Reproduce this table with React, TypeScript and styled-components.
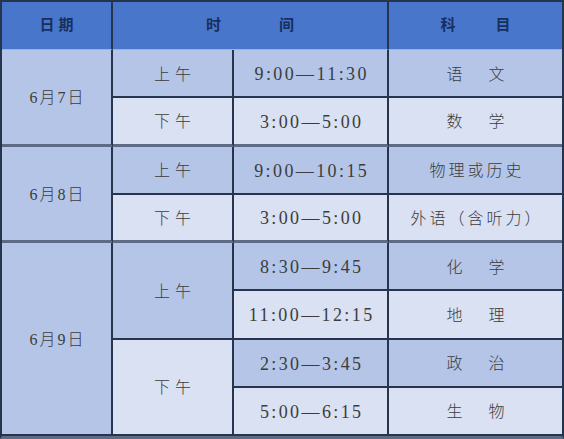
import React from "react";
import styled, { createGlobalStyle } from "styled-components";

const GlobalStyle = createGlobalStyle`
  html, body {
    margin: 0;
    padding: 0;
    background: #ffffff;
  }
  body {
    font-family: "Liberation Serif", "Noto Sans CJK SC", serif;
  }
`;

const DARK = "#b4c5e7";
const LIGHT = "#d9e1f3";
const LINE = "#27344d";
const GROUP_LINE = "#5d6b84";

type Session = { half: string; slots: { time: string; subject: string; spread?: number }[] };
type Day = { date: string; sessions: Session[] };

const days: Day[] = [
  {
    date: "6月7日",
    sessions: [
      { half: "上午", slots: [{ time: "9:00—11:30", subject: "语文", spread: 26 }] },
      { half: "下午", slots: [{ time: "3:00—5:00", subject: "数学", spread: 26 }] },
    ],
  },
  {
    date: "6月8日",
    sessions: [
      { half: "上午", slots: [{ time: "9:00—10:15", subject: "物理或历史", spread: 3 }] },
      { half: "下午", slots: [{ time: "3:00—5:00", subject: "外语（含听力）", spread: 3 }] },
    ],
  },
  {
    date: "6月9日",
    sessions: [
      {
        half: "上午",
        slots: [
          { time: "8:30—9:45", subject: "化学", spread: 26 },
          { time: "11:00—12:15", subject: "地理", spread: 26 },
        ],
      },
      {
        half: "下午",
        slots: [
          { time: "2:30—3:45", subject: "政治", spread: 26 },
          { time: "5:00—6:15", subject: "生物", spread: 26 },
        ],
      },
    ],
  },
];

const Table = styled.div`
  box-sizing: border-box;
  width: 564px;
  height: 439px;
  border: 2px solid ${LINE};
  border-bottom-color: ${GROUP_LINE};
  border-bottom-width: 3px;
  display: grid;
  grid-template-columns: 111px 121px 155px 1fr;
  grid-template-rows: 48px repeat(8, 1fr);
`;

const HeadCell = styled.div<{ $span?: number; $last?: boolean }>`
  grid-column: span ${(p) => p.$span || 1};
  box-sizing: border-box;
  background: #4776ca;
  border-right: ${(p) => (p.$last ? "none" : `2px solid ${LINE}`)};
  border-bottom: 1px solid #9db0d6;
  display: flex;
  align-items: center;
  justify-content: center;
  color: #172f5e;
  font-family: "Noto Sans CJK SC", sans-serif;
  font-weight: 700;
  font-size: 15px;
`;

const Cell = styled.div<{ $rows?: number; $tone: "dark" | "light"; $groupEnd?: boolean; $last?: boolean }>`
  grid-row: span ${(p) => p.$rows || 1};
  box-sizing: border-box;
  background: ${(p) => (p.$tone === "dark" ? DARK : LIGHT)};
  border-right: ${(p) => (p.$last ? "none" : `2px solid ${LINE}`)};
  border-bottom: ${(p) => (p.$groupEnd ? `3px solid ${GROUP_LINE}` : `2px solid ${LINE}`)};
  display: flex;
  align-items: center;
  justify-content: center;
  color: #3c3c3c;
  font-size: 16px;
  font-weight: 300;
  padding-top: 3px;
`;

const Spread = styled.span<{ $gap: number }>`
  display: inline-flex;
  align-items: baseline;
  gap: ${(p) => p.$gap}px;
  font-family: "Liberation Serif", "Noto Sans CJK SC", serif;
  line-height: 1;
`;

const Time = styled.span`
  font-family: "Liberation Serif", serif;
  font-size: 18px;
  letter-spacing: 2.4px;
  margin-right: -2.4px;
`;

const Spaced = ({ text, gap }: { text: string; gap: number }) => (
  <Spread $gap={gap}>
    {Array.from(text).map((ch, i) => (
      <span key={i}>{ch}</span>
    ))}
  </Spread>
);

export default function App() {
  const cells: React.ReactNode[] = [];
  let row = 0;
  days.forEach((day, d) => {
    const total = day.sessions.reduce((n, s) => n + s.slots.length, 0);
    cells.push(
      <Cell key={`d${d}`} $rows={total} $tone="dark" $groupEnd={d < days.length - 1}>
        <Spaced text={day.date} gap={2} />
      </Cell>
    );
    day.sessions.forEach((s, si) => {
      const endsGroup = si === day.sessions.length - 1 && d < days.length - 1;
      cells.push(
        <Cell key={`h${d}${si}`} $rows={s.slots.length} $tone={si === 0 ? "dark" : "light"} $groupEnd={endsGroup}>
          <Spaced text={s.half} gap={5} />
        </Cell>
      );
      s.slots.forEach((slot, k) => {
        const tone = row % 2 === 0 ? "dark" : "light";
        const end = endsGroup && k === s.slots.length - 1;
        // time and subject cells share the row stripe
        cells.push(
          <Cell key={`t${row}`} $tone={tone} $groupEnd={end} style={{ gridColumn: 3 }}>
            <Time>{slot.time}</Time>
          </Cell>,
          <Cell key={`s${row}`} $tone={tone} $groupEnd={end} $last style={{ gridColumn: 4 }}>
            <Spaced text={slot.subject} gap={slot.spread || 3} />
          </Cell>
        );
        row++;
      });
    });
  });

  return (
    <>
      <GlobalStyle />
      <Table>
        <HeadCell>
          <Spaced text="日期" gap={4} />
        </HeadCell>
        <HeadCell $span={2}>
          <Spaced text="时间" gap={58} />
        </HeadCell>
        <HeadCell $last>
          <Spaced text="科目" gap={40} />
        </HeadCell>
        {cells}
      </Table>
    </>
  );
}
